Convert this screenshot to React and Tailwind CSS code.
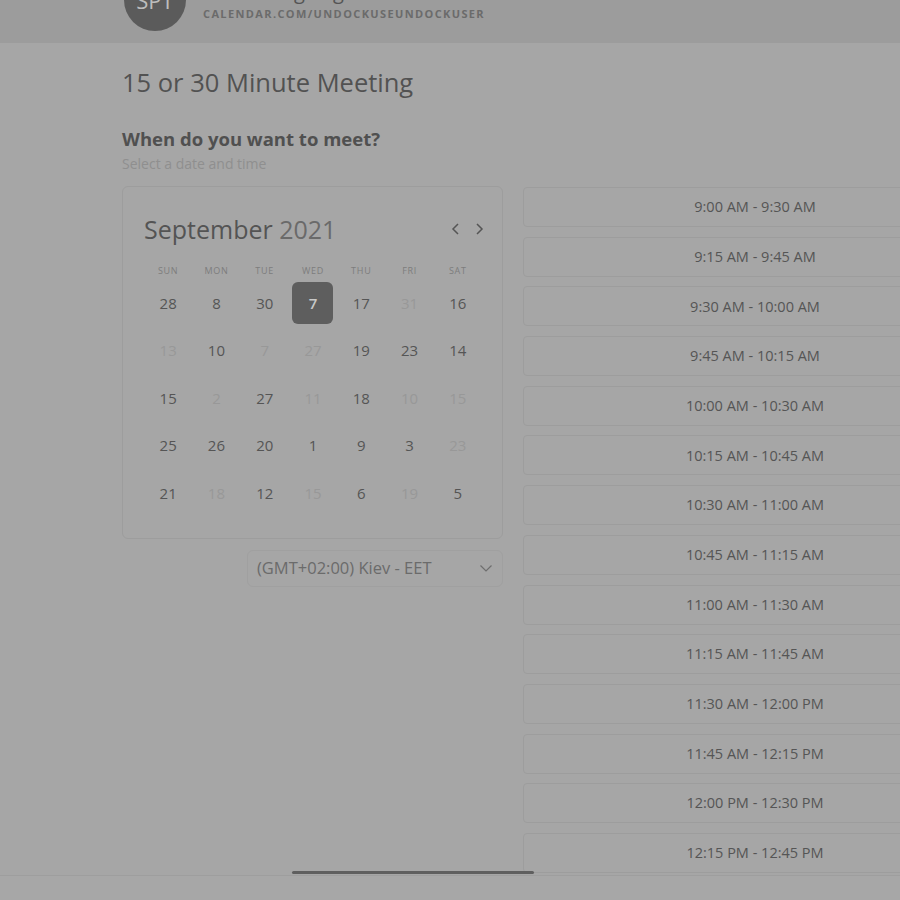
import React from "react";

const rows = [
  [["28"], ["8"], ["30"], ["7", "sel"], ["17"], ["31", "f"], ["16"]],
  [["13", "f"], ["10"], ["7", "f"], ["27", "f"], ["19"], ["23"], ["14"]],
  [["15"], ["2", "f"], ["27"], ["11", "f"], ["18"], ["10", "f"], ["15", "f"]],
  [["25"], ["26"], ["20"], ["1"], ["9"], ["3"], ["23", "f"]],
  [["21"], ["18", "f"], ["12"], ["15", "f"], ["6"], ["19", "f"], ["5"]],
];

const days = ["SUN", "MON", "TUE", "WED", "THU", "FRI", "SAT"];

const slots = [
  "9:00 AM - 9:30 AM",
  "9:15 AM - 9:45 AM",
  "9:30 AM - 10:00 AM",
  "9:45 AM - 10:15 AM",
  "10:00 AM - 10:30 AM",
  "10:15 AM - 10:45 AM",
  "10:30 AM - 11:00 AM",
  "10:45 AM - 11:15 AM",
  "11:00 AM - 11:30 AM",
  "11:15 AM - 11:45 AM",
  "11:30 AM - 12:00 PM",
  "11:45 AM - 12:15 PM",
  "12:00 PM - 12:30 PM",
  "12:15 PM - 12:45 PM",
  "12:30 PM - 1:00 PM",
];

export default function App() {
  return (
    <div
      className="relative w-[900px] h-[900px] overflow-hidden bg-[#a6a6a6] text-[#545454]"
      style={{ fontFamily: '"Open Sans", "Noto Sans", sans-serif' }}
    >
      {/* Header */}
      <div className="h-[43px] bg-[#9c9c9c] overflow-hidden">
        <div className="flex items-start pl-[124px] -mt-[31px]">
          <div className="w-[62px] h-[62px] rounded-full bg-[#5b5b5b] flex items-center justify-center text-[22px] text-[#bdbdbd] shrink-0">
            SPT
          </div>
          <div className="ml-[17px] flex flex-col">
            <div className="mt-[10px] text-[20px] leading-[26px] text-[#555]">
              Scheduling Page
            </div>
            <div className="mt-[1px] text-[11px] leading-[16px] font-bold tracking-[0.125em] text-[#6b6b6b]">
              CALENDAR.COM/UNDOCKUSEUNDOCKUSER
            </div>
          </div>
        </div>
      </div>

      {/* Content */}
      <div className="pl-[122px]">
        <h1 className="mt-[21px] text-[25.5px] leading-[36px] text-[#525252]">
          15 or 30 Minute Meeting
        </h1>
        <h2 className="mt-[26px] text-[18.5px] leading-[26px] font-bold text-[#505050]">
          When do you want to meet?
        </h2>
        <p className="mt-[2px] text-[14px] leading-[20px] text-[#8f8f8f]">
          Select a date and time
        </p>

        <div className="mt-[12px] flex gap-[20px] items-start">
          {/* Left column */}
          <div className="w-[381px] shrink-0 flex flex-col">
            <div className="border border-[#9d9d9d] rounded-md px-[20px] pt-[22px] pb-[21px]">
              <div className="flex items-center justify-between pl-[1px] -mr-[3px]">
                <div className="text-[25px] leading-[40px]">
                  <span className="text-[#545454]">September</span>{" "}
                  <span className="text-[#6a6a6a]">2021</span>
                </div>
                <div className="flex items-center gap-[11px] text-[#555]">
                  <svg width="12" height="14" viewBox="0 0 12 14" fill="none" stroke="currentColor" strokeWidth="1.5">
                    <path d="M8 2 L3 7 L8 12" />
                  </svg>
                  <svg width="12" height="14" viewBox="0 0 12 14" fill="none" stroke="currentColor" strokeWidth="1.5">
                    <path d="M4 2 L9 7 L4 12" />
                  </svg>
                </div>
              </div>
              <div className="mt-[15px] grid grid-cols-7 pl-[1px]">
                {days.map((d) => (
                  <div
                    key={d}
                    className="text-center text-[9px] leading-[14px] tracking-[0.08em] text-[#7d7d7d]"
                  >
                    {d}
                  </div>
                ))}
              </div>
              <div className="mt-[1px] grid grid-cols-7 pl-[1px]">
                {rows.flat().map(([n, s], i) => (
                  <div key={i} className="h-[47.5px] flex items-center justify-center">
                    {s === "sel" ? (
                      <div className="w-[41px] h-[42px] rounded-md bg-[#5e5e5e] text-[#c8c8c8] flex items-center justify-center text-[15px] font-semibold">
                        {n}
                      </div>
                    ) : (
                      <span
                        className={
                          "text-[15px] " +
                          (s === "f" ? "text-[#989898]" : "text-[#555]")
                        }
                      >
                        {n}
                      </span>
                    )}
                  </div>
                ))}
              </div>
            </div>

            <div className="mt-[11px] ml-[125px] h-[37px] border border-[#a0a0a0] rounded-md flex items-center justify-between pl-[9px] pr-[9px]">
              <span className="text-[16.5px] text-[#6b6b6b]">(GMT+02:00) Kiev - EET</span>
              <svg width="14" height="10" viewBox="0 0 14 10" fill="none" stroke="#6e6e6e" strokeWidth="1.2">
                <path d="M1.5 2.5 L7 8 L12.5 2.5" />
              </svg>
            </div>
          </div>

          {/* Right column: slots */}
          <div className="mt-[1px] w-[464px] shrink-0 flex flex-col gap-[9.7px]">
            {slots.map((t) => (
              <div
                key={t}
                className="h-[40px] border border-[#9d9d9d] rounded-[4px] flex items-center justify-center text-[14.5px] font-medium text-[#555]"
              >
                {t}
              </div>
            ))}
          </div>
        </div>
      </div>

      {/* Bottom overlay bar */}
      <div className="absolute left-0 right-0 top-[875px] h-[25px] bg-[#a7a7a7] border-t border-[#9e9e9e]" />
      <div className="absolute left-[292px] top-[871px] w-[242px] h-[3px] bg-[#5f5f5f] rounded-full" />
    </div>
  );
}
